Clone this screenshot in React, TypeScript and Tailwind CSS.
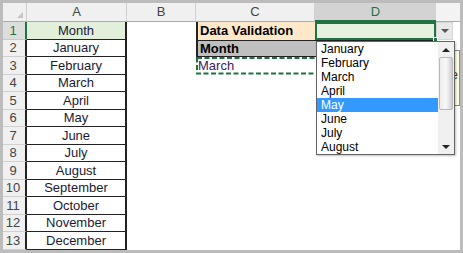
import React from "react";

const months = [
  "January", "February", "March", "April", "May", "June",
  "July", "August", "September", "October", "November", "December",
];

const rows = ["Month", ...months];

const listItems = ["January", "February", "March", "April", "May", "June", "July", "August"];

function ColHead({ label, active }: { label?: string; active?: boolean }) {
  if (active) {
    return (
      <div className="bg-[#d3d3d3] border-b-2 border-[#217346] text-[#217346] flex items-center justify-center">
        {label}
      </div>
    );
  }
  return (
    <div className="bg-[#f0f0f0] border-b border-b-[#ababab] border-r border-r-[#d0d0d0] text-[#444] flex items-center justify-center">
      {label}
    </div>
  );
}

export default function App() {
  return (
    <div className="w-[463px] h-[253px] bg-[#bcbcbc] p-[3px] font-['Liberation_Sans',Arial,sans-serif] text-[13px]">
      <div className="relative w-full h-full bg-white overflow-hidden grid grid-cols-[24px_100px_69px_119px_121px_1fr] grid-rows-[19px_repeat(13,minmax(0,1fr))]">
        {/* column headers */}
        <div className="bg-[#f0f0f0] border-b border-b-[#ababab] border-r border-r-[#d0d0d0] flex items-end justify-end p-[3px]">
          <div className="w-0 h-0 border-l-[6px] border-l-transparent border-b-[6px] border-b-[#c4c4c4]" />
        </div>
        <ColHead label="A" />
        <ColHead label="B" />
        <ColHead label="C" />
        <ColHead label="D" active />
        <div className="bg-[#f3f3f3] border-b border-b-[#ababab]" />

        {rows.map((text, i) => {
          const row = i + 1;
          return (
            <React.Fragment key={text}>
              {row === 1 ? (
                <div className="bg-[#dcdedc] border-r-2 border-r-[#217346] border-b border-b-[#c8c8c8] text-[#217346] flex items-center justify-center pr-[2px]">
                  {row}
                </div>
              ) : (
                <div className="bg-[#f0f0f0] border-r-2 border-r-[#222] border-b border-b-[#d0d0d0] text-[#444] flex items-center justify-center pr-[2px]">
                  {row}
                </div>
              )}

              {row === 1 ? (
                <div className="bg-[#e2efda] border-r-2 border-b border-[#222] text-[#1a1a33] flex items-center justify-center">
                  {text}
                </div>
              ) : (
                <div className="border-r-2 border-b border-[#222] text-[#1a1a33] flex items-center justify-center">
                  {text}
                </div>
              )}

              <div />

              {row === 1 && (
                <>
                  <div className="bg-[#fde9c9] border-l-2 border-[#222] font-bold text-black flex items-center pl-[2px]">
                    Data Validation
                  </div>
                  <div className="relative bg-[#e6f1e0] border-2 border-[#217346]">
                    <div className="absolute right-[-4px] bottom-[-4px] w-[5px] h-[5px] bg-[#217346] border border-white" />
                  </div>
                  <div className="flex">
                    <div className="w-[17px] bg-[#e8e8e8] border border-[#d6d6d6] flex items-center justify-center">
                      <div className="w-0 h-0 border-l-[4px] border-r-[4px] border-t-[4px] border-l-transparent border-r-transparent border-t-[#555]" />
                    </div>
                  </div>
                </>
              )}
              {row === 2 && (
                <>
                  <div className="bg-[#bfbfbf] border-l-2 border-t border-b border-[#222] font-bold text-black flex items-center pl-[2px]">
                    Month
                  </div>
                  <div className="bg-[#bfbfbf] border-t border-b border-[#222]" />
                  <div />
                </>
              )}
              {row === 3 && (
                <>
                  <div className="col-span-2 relative flex items-center pl-[2px] text-[#3b2260]">
                    March
                    <svg className="absolute inset-0 w-full h-full" preserveAspectRatio="none">
                      <rect x="1" y="1" width="238" height="15.5" fill="none" stroke="#1e7145" strokeWidth="2" strokeDasharray="5 2.5" />
                    </svg>
                  </div>
                  <div />
                </>
              )}
              {row > 3 && (
                <>
                  <div />
                  <div />
                  <div />
                </>
              )}
            </React.Fragment>
          );
        })}

        {/* input message (behind list) */}
        <div className="absolute left-[337px] top-[47px] w-[120px] h-[56px] bg-[#ffffe1] border border-[#8a8a8a] text-[12px] text-[#333] flex items-center justify-end pr-[1px] pb-[6px]">
          <span className="leading-none">e</span>
        </div>

        {/* dropdown list */}
        <div className="absolute left-[313px] top-[38px] w-[139px] h-[114px] bg-white border border-[#646464] flex text-[12px] text-black shadow-[1px_1px_2px_rgba(0,0,0,0.25)]">
          <div className="flex-1 flex flex-col">
            {listItems.map((it) =>
              it === "May" ? (
                <div key={it} className="h-[14px] leading-[14px] pl-[4px] bg-[#3399ff] text-white">
                  {it}
                </div>
              ) : (
                <div key={it} className="h-[14px] leading-[14px] pl-[4px]">
                  {it}
                </div>
              )
            )}
          </div>
          <div className="w-[16px] bg-[#f0f0f0] flex flex-col">
            <div className="h-[15px] flex items-center justify-center">
              <div className="w-0 h-0 border-l-[4px] border-r-[4px] border-b-[4px] border-l-transparent border-r-transparent border-b-[#222]" />
            </div>
            <div className="h-[53px] mx-[1px] rounded-[2px] border border-[#b8b8b8] bg-gradient-to-r from-[#ececec] via-[#f9f9f9] to-[#cdcdcd]" />
            <div className="flex-1" />
            <div className="h-[15px] flex items-center justify-center">
              <div className="w-0 h-0 border-l-[4px] border-r-[4px] border-t-[4px] border-l-transparent border-r-transparent border-t-[#222]" />
            </div>
          </div>
        </div>
      </div>
    </div>
  );
}
